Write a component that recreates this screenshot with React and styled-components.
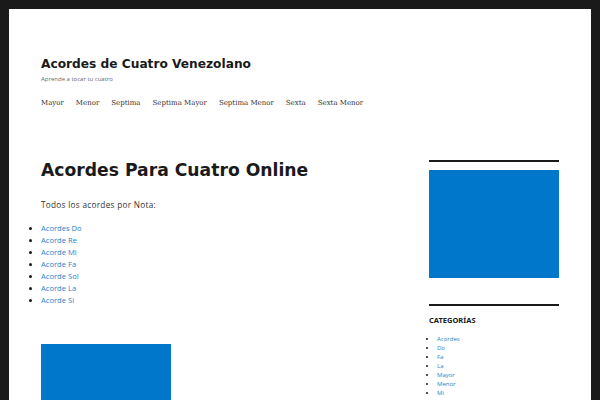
import React from 'react';
import styled, { createGlobalStyle } from 'styled-components';

const GlobalStyle = createGlobalStyle`
  html, body {
    margin: 0;
    padding: 0;
    background: #1a1a1a;
  }
  body {
    font-family: "Open Sans", "Liberation Sans", sans-serif;
    color: #1a1a1a;
  }
`;

const notes = ['Acordes Do', 'Acorde Re', 'Acorde Mi', 'Acorde Fa', 'Acorde Sol', 'Acorde La', 'Acorde Si'];
const menu = ['Mayor', 'Menor', 'Septima', 'Septima Mayor', 'Septima Menor', 'Sexta', 'Sexta Menor'];
const categories = ['Acordes', 'Do', 'Fa', 'La', 'Mayor', 'Menor', 'Mi'];

const App = () => (
  <>
    <GlobalStyle />
    <Page>
      <Header>
        <SiteTitle>Acordes de Cuatro Venezolano</SiteTitle>
        <Tagline>Aprende a tocar tu cuatro</Tagline>
        <Nav>
          {menu.map((m) => (
            <NavLink key={m}>{m}</NavLink>
          ))}
        </Nav>
      </Header>
      <Content>
        <Main>
          <PageTitle>Acordes Para Cuatro Online</PageTitle>
          <Intro>Todos los acordes por Nota:</Intro>
          <NoteList>
            {notes.map((n) => (
              <li key={n}><TextLink>{n}</TextLink></li>
            ))}
          </NoteList>
          <AdBox $width={130} $height={80} />
        </Main>
        <Sidebar>
          <Widget>
            <AdBox $width={130} $height={108} />
          </Widget>
          <Widget>
            <WidgetTitle>Categorías</WidgetTitle>
            <CatList>
              {categories.map((c) => (
                <li key={c}><TextLink>{c}</TextLink></li>
              ))}
            </CatList>
          </Widget>
        </Sidebar>
      </Content>
    </Page>
  </>
);

const Page = styled.div`
  margin: 9px 9px 0;
  background: #fff;
  height: 391px;
  overflow: hidden;
  padding: 0 32px;
`;

const Header = styled.header`
  padding-top: 47px;
  display: flex;
  flex-direction: column;
`;

const SiteTitle = styled.h1`
  margin: 0;
  font-family: "DejaVu Sans", sans-serif;
  font-weight: bold;
  font-size: 12.2px;
  line-height: 16px;
  color: #1a1a1a;
`;

const Tagline = styled.p`
  margin: 2px 0 0;
  font-size: 6px;
  line-height: 10px;
  color: #686868;
`;

const Nav = styled.nav`
  display: flex;
  gap: 12px;
  margin-top: 13px;
`;

const NavLink = styled.a`
  font-family: "DejaVu Serif", serif;
  font-size: 7px;
  line-height: 12px;
  color: #333;
`;

const Content = styled.div`
  display: flex;
  justify-content: space-between;
  margin-top: 48px;
`;

const Main = styled.main`
  display: flex;
  flex-direction: column;
  align-items: flex-start;
`;

const PageTitle = styled.h2`
  margin: 0;
  font-family: "DejaVu Sans", sans-serif;
  font-weight: bold;
  font-size: 17.2px;
  line-height: 26px;
  color: #1a1a1a;
`;

const Intro = styled.p`
  margin: 16px 0 0;
  font-size: 8.2px;
  letter-spacing: 0.3px;
  line-height: 12px;
  color: #333;
`;

const NoteList = styled.ul`
  margin: 11px 0 0;
  padding-left: 0;
  list-style: disc outside;
  font-size: 7.6px;
  line-height: 12px;
  color: #1a1a1a;
`;

const TextLink = styled.a`
  color: #1f84c8;
`;

const AdBox = styled.div`
  width: ${(p) => p.$width}px;
  height: ${(p) => p.$height}px;
  background: #0077cb;
  margin-top: 38px;
`;

const Sidebar = styled.aside`
  width: 130px;
  display: flex;
  flex-direction: column;
  gap: 26px;
  margin-top: 3px;
`;

const Widget = styled.section`
  border-top: 2px solid #1a1a1a;
  padding-top: 8px;

  ${AdBox} {
    margin-top: 0;
  }
`;

const WidgetTitle = styled.h3`
  margin: 0;
  font-family: "Noto Sans", sans-serif;
  font-weight: bold;
  font-size: 7.5px;
  line-height: 12px;
  text-transform: uppercase;
  color: #1a1a1a;
`;

const CatList = styled.ul`
  margin: 9px 0 0;
  padding-left: 8px;
  font-size: 6px;
  line-height: 9px;
  list-style: disc;
`;

export default App;
